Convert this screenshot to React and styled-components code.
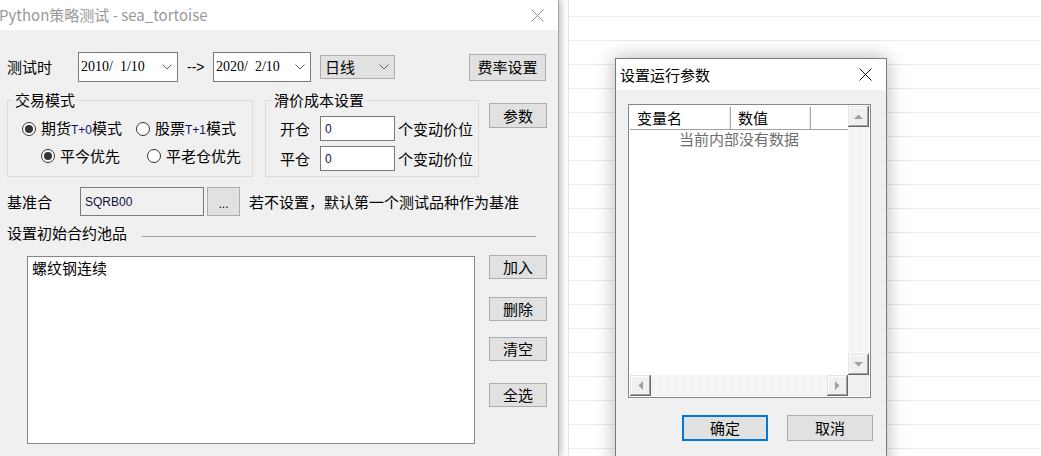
import React from "react";
import styled, { createGlobalStyle } from "styled-components";

const CJK = `"Noto Sans CJK SC", "Noto Sans", sans-serif`;

const GlobalStyle = createGlobalStyle`
  html, body {
    margin: 0;
    padding: 0;
    background: #fff;
  }
  body {
    font-family: ${CJK};
    font-size: 15px;
    color: #000;
  }
`;

const Desktop = styled.div`
  position: relative;
  width: 1041px;
  height: 456px;
  overflow: hidden;
  display: flex;
  font-family: ${CJK};
  font-size: 15px;
  line-height: 16px;
`;

const Sheet = styled.div`
  flex: 1;
  margin-left: 9px;
  border-left: 1px solid #e4e4e4;
  background-color: #fff;
  background-image: linear-gradient(to bottom, #ebebeb 0, #ebebeb 1px, transparent 1px);
  background-size: 100% 24px;
  background-position: 0 16px;
`;

const Window = styled.div`
  position: relative;
  z-index: 1;
  flex: none;
  width: 558px;
  height: 456px;
  background: #f0f0f0;
  border-right: 1px solid #a6a6a6;
  box-shadow: 2px 0 7px rgba(0, 0, 0, 0.28);
  display: flex;
  flex-direction: column;
`;

const TitleBar = styled.div`
  flex: none;
  height: ${(p) => p.$h}px;
  background: #fff;
  display: flex;
  align-items: center;
  justify-content: space-between;
  padding: 0 14px 0 ${(p) => p.$pl}px;
`;

const TitleText = styled.div`
  color: ${(p) => (p.$active ? "#000" : "#999")};
  font-size: 15px;
  white-space: nowrap;
  margin-left: ${(p) => p.$ml || 0}px;
`;

const Body = styled.div`
  flex: 1;
  padding: 22px 12px 0 7px;
  display: flex;
  flex-direction: column;
`;

const Row = styled.div`
  flex: none;
  display: flex;
  align-items: ${(p) => p.$align || "center"};
  height: ${(p) => p.$h}px;
  margin-top: ${(p) => p.$mt || 0}px;
`;

const Label = styled.span`
  flex: none;
  width: ${(p) => p.$w}px;
  white-space: nowrap;
`;

const DateBox = styled.div`
  flex: none;
  box-sizing: border-box;
  width: ${(p) => p.$w}px;
  height: 30px;
  border: 1px solid #7a7a7a;
  background: #fff;
  display: flex;
  align-items: center;
  justify-content: space-between;
  padding: 0 5px 0 2px;
  font-family: "Liberation Serif", serif;
  font-size: 14px;
  white-space: pre;
`;

const Arrow = styled.span`
  flex: none;
  width: 35px;
  box-sizing: border-box;
  padding-left: 9px;
  font-family: "Liberation Sans", sans-serif;
  font-size: 14px;
`;

const Select = styled.div`
  flex: none;
  box-sizing: border-box;
  margin-left: 9px;
  width: 75px;
  height: 24px;
  background: #e1e1e1;
  border: 1px solid #adadad;
  display: flex;
  align-items: center;
  justify-content: space-between;
  padding: 0 5px 0 4px;
`;

const Btn = styled.button`
  flex: none;
  box-sizing: border-box;
  width: ${(p) => p.$w}px;
  height: ${(p) => p.$h}px;
  margin: ${(p) => p.$m || "0"};
  padding: 0;
  background: #e1e1e1;
  border: ${(p) => (p.$primary ? "2px solid #0078d7" : "1px solid #adadad")};
  font-family: ${CJK};
  font-size: 15px;
  line-height: 16px;
  color: #000;
  display: flex;
  align-items: center;
  justify-content: center;
`;

const Dots = styled.span`
  font-family: "Liberation Sans", sans-serif;
  font-size: 12px;
  margin-top: 4px;
`;

const Group = styled.fieldset`
  flex: none;
  box-sizing: border-box;
  margin: 0 0 0 ${(p) => p.$ml || 0}px;
  width: ${(p) => p.$w}px;
  height: 85px;
  min-width: 0;
  border: 1px solid #dcdcdc;
  padding: 8px 0 0 0;
`;

const Legend = styled.legend`
  margin-left: ${(p) => p.$ml}px;
  padding: 0 2px;
  line-height: 16px;
  font-size: 15px;
`;

const RadioRow = styled.div`
  display: flex;
  align-items: center;
  height: 26px;
  margin-top: ${(p) => p.$mt || 0}px;
  padding-left: ${(p) => p.$pl}px;
`;

const RadioItem = styled.label`
  flex: none;
  display: flex;
  align-items: center;
  gap: 5px;
  width: ${(p) => (p.$w ? `${p.$w}px` : "auto")};
  white-space: nowrap;
`;

const RadioDot = styled.span`
  flex: none;
  box-sizing: border-box;
  width: 14px;
  height: 14px;
  border-radius: 50%;
  border: 1px solid #333;
  background: #fff;
  display: flex;
  align-items: center;
  justify-content: center;

  &::after {
    content: "";
    width: 8px;
    height: 8px;
    border-radius: 50%;
    background: #333;
    display: ${(p) => (p.$on ? "block" : "none")};
  }
`;

const Small = styled.span`
  font-family: "Liberation Sans", sans-serif;
  font-size: 12px;
  color: #101060;
`;

const FieldRow = styled.div`
  display: flex;
  align-items: center;
  height: 25px;
  margin-top: ${(p) => p.$mt || 0}px;
  padding-left: 14px;
`;

const Edit = styled.div`
  flex: none;
  box-sizing: border-box;
  width: ${(p) => p.$w}px;
  height: ${(p) => p.$h}px;
  border: 1px solid #7a7a7a;
  background: ${(p) => (p.$readonly ? "#f0f0f0" : "#fff")};
  display: flex;
  align-items: center;
  padding-left: 4px;
  font-family: "Liberation Sans", sans-serif;
  font-size: 12px;
  color: #101040;
`;

const Hint = styled.span`
  margin-left: ${(p) => p.$ml}px;
  white-space: nowrap;
`;

const Rule = styled.div`
  flex: 1;
  height: 1px;
  margin: 6px 10px 0 0;
  background: #a0a0a0;
`;

const ListBox = styled.div`
  flex: none;
  box-sizing: border-box;
  width: 448px;
  height: 188px;
  margin: 1px 0 0 20px;
  border: 1px solid #828790;
  background: #fff;
  padding: 3px 4px;
`;

const BtnColumn = styled.div`
  display: flex;
  flex-direction: column;
  margin-left: 14px;
`;

const Dialog = styled.div`
  position: absolute;
  left: 615px;
  top: 58px;
  z-index: 2;
  box-sizing: border-box;
  width: 272px;
  height: 420px;
  border: 1px solid #7a7a7a;
  background: #f0f0f0;
  box-shadow: 0 0 18px rgba(0, 0, 0, 0.3);
  display: flex;
  flex-direction: column;
`;

const DialogBody = styled.div`
  padding: 14px 13px 0 12px;
  display: flex;
  flex-direction: column;
`;

const ListView = styled.div`
  box-sizing: border-box;
  width: 243px;
  height: 294px;
  border: 1px solid #828790;
  padding: 1px;
  background: #fff;
  display: grid;
  grid-template-columns: 1fr 21px;
  grid-template-rows: 1fr 21px;
`;

const ListMain = styled.div`
  display: flex;
  flex-direction: column;
  overflow: hidden;
`;

const Header = styled.div`
  display: flex;
  height: 22px;
  margin-top: 1px;
  border-bottom: 1px solid #a0a0a0;
`;

const HeadCell = styled.div`
  box-sizing: border-box;
  flex: ${(p) => (p.$w ? `none` : 1)};
  width: ${(p) => (p.$w ? `${p.$w}px` : "auto")};
  padding-left: 7px;
  display: flex;
  align-items: center;
  border-right: ${(p) => (p.$w ? "1px solid #a8a8a8" : "none")};
  box-shadow: ${(p) => (p.$w ? "inset -1px 0 #e8e8e8" : "none")};
`;

const Empty = styled.div`
  margin-top: 1px;
  text-align: center;
  color: #6d6d6d;
`;

const Track = styled.div`
  display: flex;
  flex-direction: ${(p) => (p.$vertical ? "column" : "row")};
  justify-content: space-between;
  background: repeating-conic-gradient(#ececec 0 25%, #fff 0 50%) 0 0 / 2px 2px;
`;

const Corner = styled.div`
  background: #f0f0f0;
`;

const ScrollBtn = styled.div`
  flex: none;
  width: 21px;
  height: 21px;
  box-sizing: border-box;
  background: #f0f0f0;
  box-shadow: inset -1px -1px #696969, inset 1px 1px #e3e3e3, inset -2px -2px #a0a0a0, inset 2px 2px #fff;
  display: flex;
  align-items: center;
  justify-content: center;
`;

const ButtonBar = styled.div`
  display: flex;
  justify-content: flex-end;
  gap: 19px;
  margin-top: 17px;
`;

const CloseIcon = ({ color }) => (
  <svg width="13" height="13" viewBox="0 0 13 13">
    <path d="M0.5 0.5 L12.5 12.5 M12.5 0.5 L0.5 12.5" stroke={color} strokeWidth="1" fill="none" />
  </svg>
);

const Chevron = () => (
  <svg width="10" height="6" viewBox="0 0 10 6">
    <path d="M0.5 0.5 L5 5 L9.5 0.5" stroke="#606060" strokeWidth="1" fill="none" />
  </svg>
);

const Tri = ({ dir }) => {
  const pts = {
    up: "0,5 9,5 4.5,0.5",
    down: "0,0 9,0 4.5,4.5",
    left: "5,0 5,9 0.5,4.5",
    right: "0,0 0,9 4.5,4.5",
  }[dir];
  const vertical = dir === "up" || dir === "down";
  return (
    <svg width={vertical ? 9 : 5} height={vertical ? 5 : 9} viewBox={vertical ? "0 0 9 5" : "0 0 5 9"}>
      <polygon points={pts} fill="#a0a0a0" />
    </svg>
  );
};

const poolButtons = [
  { text: "加入", m: "0" },
  { text: "删除", m: "18px 0 0 0" },
  { text: "清空", m: "16px 0 0 0" },
  { text: "全选", m: "22px 0 0 0" },
];

const App = () => {
  return (
    <Desktop>
      <GlobalStyle />
      <Window>
        <TitleBar $h={30} $pl={0}>
          <TitleText $ml={-1}>Python策略测试 - sea_tortoise</TitleText>
          <CloseIcon color="#8a8a8a" />
        </TitleBar>
        <Body>
          <Row $h={30}>
            <Label $w={71}>测试时</Label>
            <DateBox $w={100}>
              <span>2010/  1/10</span>
              <Chevron />
            </DateBox>
            <Arrow>--&gt;</Arrow>
            <DateBox $w={98}>
              <span>2020/  2/10</span>
              <Chevron />
            </DateBox>
            <Select>
              <span>日线</span>
              <Chevron />
            </Select>
            <Btn $w={77} $h={27} $m="0 0 0 auto">费率设置</Btn>
          </Row>

          <Row $h={85} $mt={10} $align="flex-start">
            <Group $w={246}>
              <Legend $ml={5}>交易模式</Legend>
              <RadioRow $pl={14}>
                <RadioItem $w={114}>
                  <RadioDot $on />
                  <span>期货<Small>T+0</Small>模式</span>
                </RadioItem>
                <RadioItem>
                  <RadioDot />
                  <span>股票<Small>T+1</Small>模式</span>
                </RadioItem>
              </RadioRow>
              <RadioRow $pl={33} $mt={1}>
                <RadioItem $w={106}>
                  <RadioDot $on />
                  <span>平今优先</span>
                </RadioItem>
                <RadioItem>
                  <RadioDot />
                  <span>平老仓优先</span>
                </RadioItem>
              </RadioRow>
            </Group>
            <Group $w={214} $ml={12}>
              <Legend $ml={6}>滑价成本设置</Legend>
              <FieldRow>
                <Label $w={40}>开仓</Label>
                <Edit $w={75} $h={25}>0</Edit>
                <Hint $ml={3}>个变动价位</Hint>
              </FieldRow>
              <FieldRow $mt={5}>
                <Label $w={40}>平仓</Label>
                <Edit $w={75} $h={25}>0</Edit>
                <Hint $ml={3}>个变动价位</Hint>
              </FieldRow>
            </Group>
            <Btn $w={58} $h={25} $m="11px 0 0 10px">参数</Btn>
          </Row>

          <Row $h={29} $mt={10}>
            <Label $w={73}>基准合</Label>
            <Edit $w={124} $h={29} $readonly>SQRB00</Edit>
            <Btn $w={33} $h={29} $m="0 0 0 3px">
              <Dots>...</Dots>
            </Btn>
            <Hint $ml={9}>若不设置，默认第一个测试品种作为基准</Hint>
          </Row>

          <Row $h={16} $mt={9}>
            <Label $w={135}>设置初始合约池品</Label>
            <Rule />
          </Row>

          <Row $h={190} $mt={14} $align="flex-start">
            <ListBox>螺纹钢连续</ListBox>
            <BtnColumn>
              {poolButtons.map((b, i) => (
                <Btn key={i} $w={58} $h={24} $m={b.m}>
                  {b.text}
                </Btn>
              ))}
            </BtnColumn>
          </Row>
        </Body>
      </Window>

      <Sheet />

      <Dialog>
        <TitleBar $h={31} $pl={4}>
          <TitleText $active>设置运行参数</TitleText>
          <CloseIcon color="#111" />
        </TitleBar>
        <DialogBody>
          <ListView>
            <ListMain>
              <Header>
                <HeadCell $w={101}>变量名</HeadCell>
                <HeadCell $w={80}>数值</HeadCell>
                <HeadCell />
              </Header>
              <Empty>当前内部没有数据</Empty>
            </ListMain>
            <Track $vertical>
              <ScrollBtn>
                <Tri dir="up" />
              </ScrollBtn>
              <ScrollBtn>
                <Tri dir="down" />
              </ScrollBtn>
            </Track>
            <Track>
              <ScrollBtn>
                <Tri dir="left" />
              </ScrollBtn>
              <ScrollBtn>
                <Tri dir="right" />
              </ScrollBtn>
            </Track>
            <Corner />
          </ListView>
          <ButtonBar>
            <Btn $w={86} $h={26} $primary>确定</Btn>
            <Btn $w={86} $h={26}>取消</Btn>
          </ButtonBar>
        </DialogBody>
      </Dialog>
    </Desktop>
  );
};

export default App;
